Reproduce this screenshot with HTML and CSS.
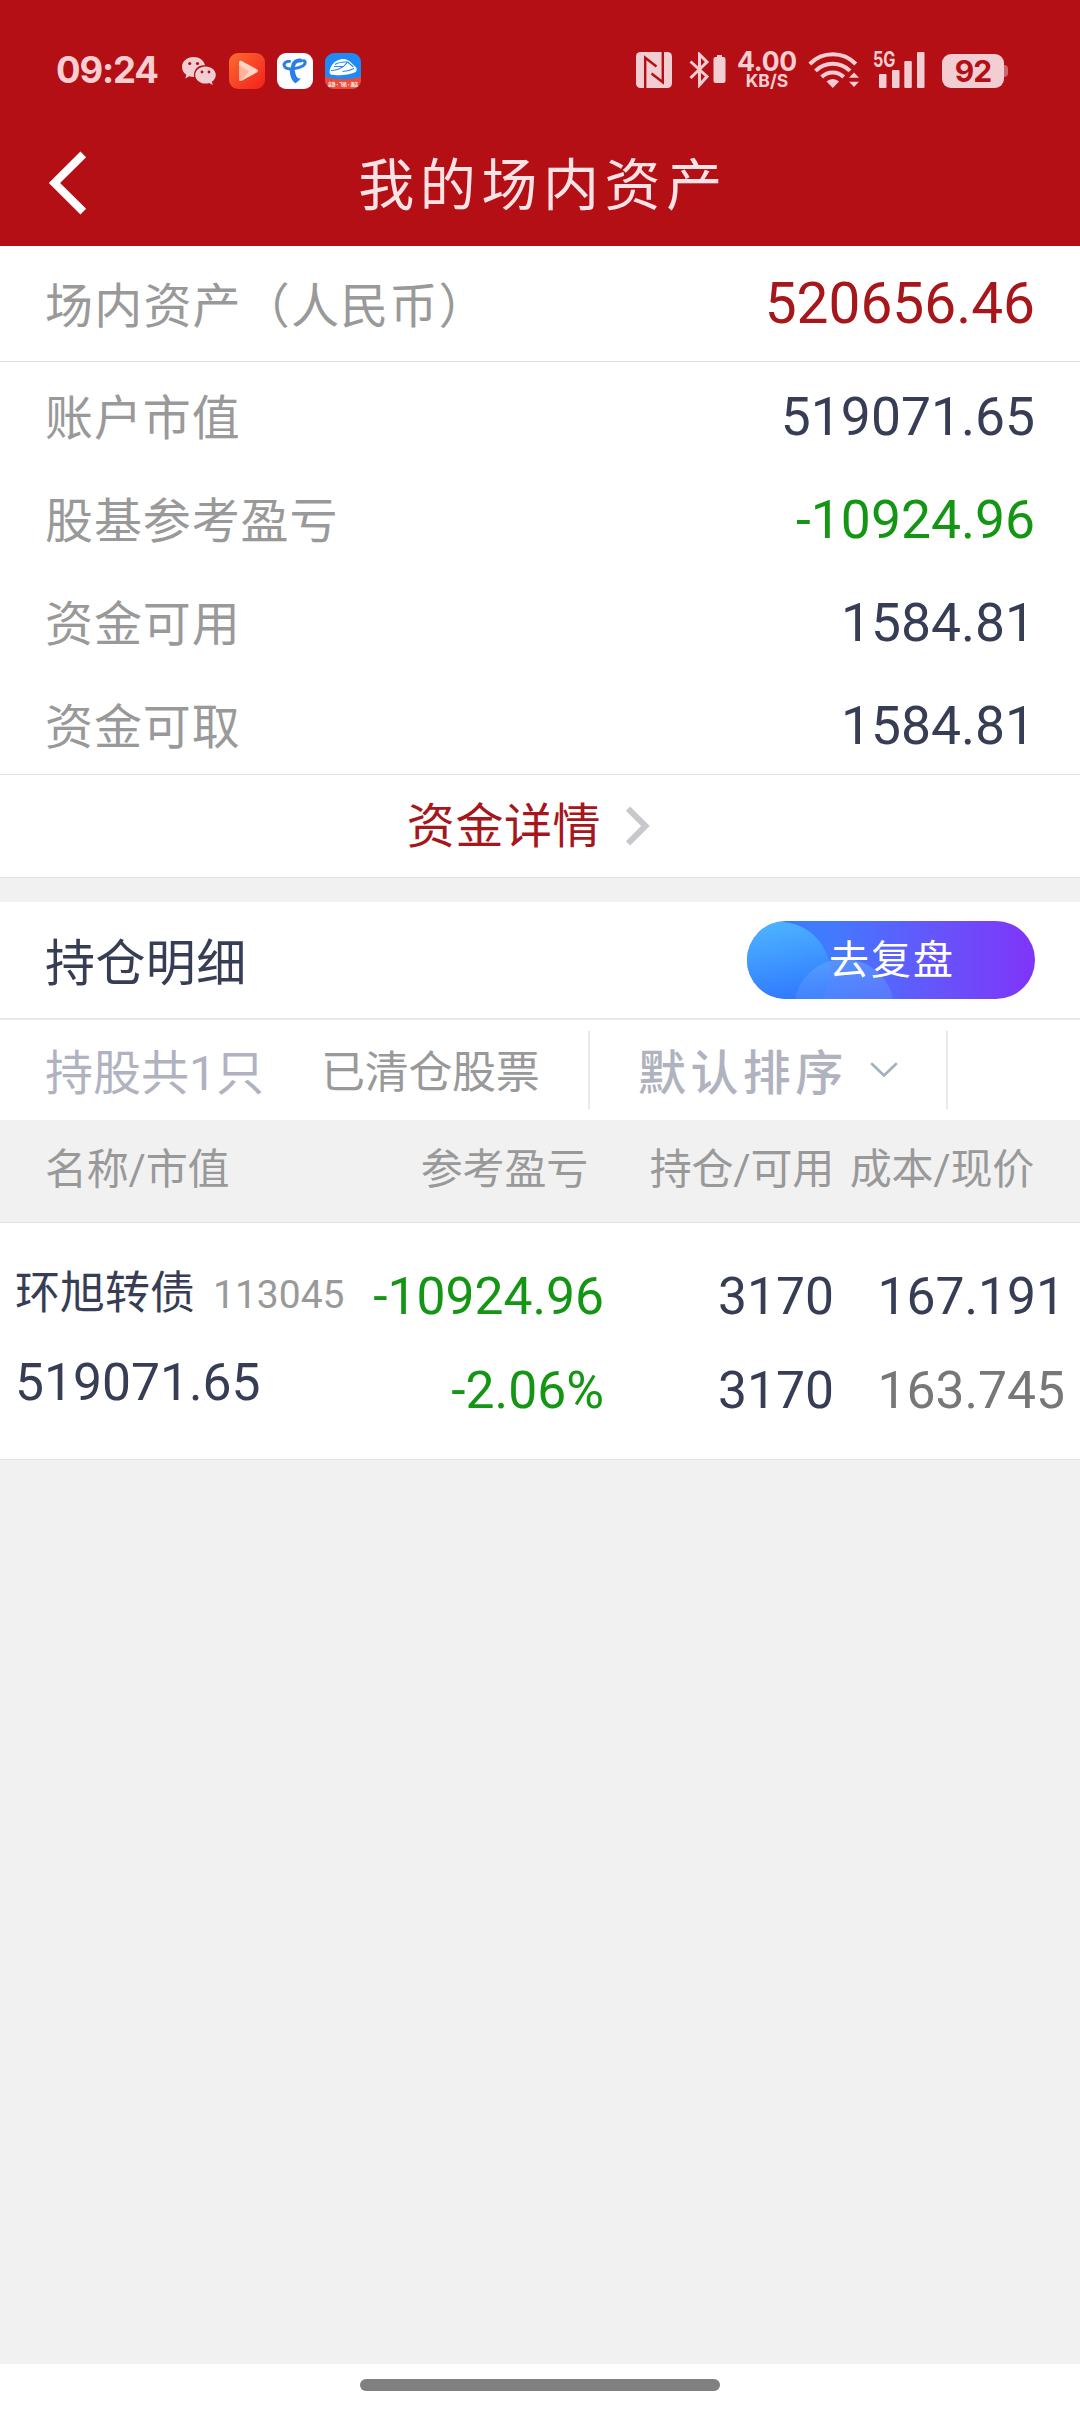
FILE: index.html
```html
<!DOCTYPE html>
<html lang="zh-CN">
<head>
<meta charset="utf-8">
<title>我的场内资产</title>
<link rel="stylesheet" href="styles.css">
</head>
<body>
<header class="top">
  <div class="status">
    <span class="clock">09:24</span>
    <div class="apps">
      <svg class="wechat" width="34" height="30" viewBox="0 0 34 30">
        <path class="tint" d="M11.5 1C5 1 0 5.400 0 11c0 3.200 1.700 6 4.300 7.800L3.300 22.400l4-2.100c1.300.4 2.700.6 4.200.6h.7A9.500 9.500 0 0 1 23 9.300C22 4.500 17.300 1 11.500 1z"/>
        <path class="tint" d="M23.500 10.500C17.700 10.500 13.200 14.300 13.200 19s4.500 8.600 10.300 8.600c1.300 0 2.600-.2 3.700-.6l3.600 1.900-1-3.200C32.300 24.200 33.800 21.700 33.800 19c0-4.700-4.500-8.500-10.300-8.500z"/>
        <g class="hole"><circle cx="7.700" cy="7.500" r="1.600"/><circle cx="15.500" cy="7.500" r="1.600"/><circle cx="20" cy="16" r="1.400"/><circle cx="27" cy="16" r="1.400"/></g>
      </svg>
      <svg width="36" height="36" viewBox="0 0 36 36">
        <defs><linearGradient id="play" x1="0" y1="0" x2="1" y2="1"><stop offset="0" stop-color="#fb6b30"/><stop offset="1" stop-color="#f4201c"/></linearGradient></defs>
        <rect width="36" height="36" rx="9" fill="url(#play)"/>
        <path d="M10 9.500c0-1.500 1.300-2.200 2.600-1.500l15.600 8.400c1.200.7 1.200 2.200 0 2.900L12.600 27.800c-1.300.7-2.600 0-2.600-1.500z" fill="#fdd5c7"/>
        <path d="M10 12l10 6.500L12.600 27.800c-1.300.7-2.600 0-2.600-1.500z" fill="#fcb39c"/>
      </svg>
      <svg width="36" height="36" viewBox="0 0 36 36">
        <rect width="36" height="36" rx="9" fill="#fff"/>
        <g fill="none" stroke="#2b7fe8" stroke-linecap="round" stroke-linejoin="round">
          <path d="M12.500 8.300C8.500 8.300 6.500 10.300 7.200 12.700c.8 2.800 4.500 3.600 9 3 6-.8 12-3 12-6 0-1-.7-1.800-1.700-1.900" stroke-width="3"/>
          <path d="M23.500 7.500C19.500 7 16.500 9.500 15.800 14c-.6 5 .2 9.500 3 13.500" stroke-width="4"/>
        </g>
        <path d="M12.800 17c0 6 2 11 5.700 13.300.8-.2 1-.8 1-1.500 1.800-.3 3-1.500 4.200-3.500-3.200.8-5.200-2.300-5.700-7.300z" fill="#2b7fe8"/>
      </svg>
      <svg width="36" height="36" viewBox="0 0 36 36">
        <defs><clipPath id="tile"><rect width="36" height="36" rx="9"/></clipPath></defs>
        <g clip-path="url(#tile)">
          <rect width="36" height="36" fill="#1f8af5"/>
          <path d="M0 24q18 4.500 36 0V36H0z" fill="#ee4a35"/>
          <path d="M4.500 19C5 13 9 7.500 16 6.200c6-.8 9 2.300 12 5.300 2.500 2 4 3.500 3.700 5.500-.4 2.500-4.700 4-11.700 4.700-6 .7-13 .8-14.500-.4-.7-.6-1-1.300-1-2.300z" fill="#fff"/>
          <path d="M10 11.500q4-3 12.500-2.500l-4 4.500H9M6 17.500q7 0 12-4M17.500 18.500q7-.5 11.500-3M22.500 9l6 5" fill="none" stroke="#1f8af5" stroke-width="1.100"/>
          <text x="18" y="33.300" class="tile-text" textLength="30" lengthAdjust="spacingAndGlyphs">高铁·飞机·酒店</text>
        </g>
      </svg>
    </div>
    <div class="signals">
      <svg width="36" height="36" viewBox="0 0 36 36">
        <rect class="tint" width="36" height="36" rx="4.500"/>
        <path class="cut" d="M9.200 36V5.800L20.500 14.500M26.800 0v30.200L15.500 21.500" stroke-width="2.400"/>
      </svg>
      <svg class="bt" width="37" height="36" viewBox="0 0 37 36">
        <path class="line" d="M1.500 9.500l16.500 15L10.500 33V2.500L18 10 1.500 26" stroke-width="3"/>
        <path class="tint" d="M28 3h5v2h1.500a2 2 0 0 1 2 2v22a2 2 0 0 1-2 2h-8a2 2 0 0 1-2-2V7a2 2 0 0 1 2-2H28z"/>
      </svg>
      <div class="speed"><b>4.00</b><span>KB/S</span></div>
      <svg class="wifi" width="52" height="36" viewBox="0 0 52 36">
        <g class="line" stroke-width="4"><path d="M1.800 12a32 32 0 0 1 46 0"/><path d="M7.500 18.800a24.500 24.500 0 0 1 34.500 0"/><path d="M13.700 25a15.500 15.500 0 0 1 22 0"/></g>
        <path class="tint" d="M24.800 36l-6.300-6.500a9 9 0 0 1 12.600 0z"/>
        <path class="tint" d="M46 20.500l5 5.300H41zM46 35l5-5.300H41z"/>
      </svg>
      <svg class="cell" width="52" height="37" viewBox="0 -1 52 37">
        <text x="0" y="14.800" class="net" textLength="22.500" lengthAdjust="spacingAndGlyphs">5G</text>
        <g class="tint"><rect x="6" y="22" width="7.500" height="14" rx="1"/><rect x="19" y="18" width="7.500" height="18" rx="1"/><rect x="31.300" y="9" width="7.500" height="27" rx="1"/><rect x="44" y="0" width="7.500" height="36" rx="1"/></g>
      </svg>
      <div class="battery"><span>92</span></div>
    </div>
  </div>
  <div class="nav">
    <svg class="back" width="40" height="64" viewBox="0 0 40 64"><path d="M35.300 3.300L6.500 32l28.800 28.700"/></svg>
    <h1>我的场内资产</h1>
  </div>
</header>

<section class="summary">
  <div class="row total"><span class="label">场内资产（人民币）</span><span class="num">520656.46</span></div>
  <div class="rows">
    <div class="row"><span class="label">账户市值</span><span class="num">519071.65</span></div>
    <div class="row"><span class="label">股基参考盈亏</span><span class="num down">-10924.96</span></div>
    <div class="row"><span class="label">资金可用</span><span class="num">1584.81</span></div>
    <div class="row"><span class="label">资金可取</span><span class="num">1584.81</span></div>
  </div>
  <a class="detail"><span>资金详情</span><svg width="26" height="40" viewBox="0 0 26 40"><path d="M3 2.700L20.500 20 3 37.300"/></svg></a>
</section>

<section class="holdings">
  <div class="heading">
    <h2>持仓明细</h2>
    <a class="review">
      <svg class="review-bg" width="288" height="78" viewBox="0 0 288 78">
        <defs>
          <linearGradient id="pill"><stop offset="0" stop-color="#3179ff"/><stop offset=".28" stop-color="#417bff"/><stop offset=".65" stop-color="#6555fb"/><stop offset="1" stop-color="#8034f8"/></linearGradient>
          <linearGradient id="c1" x1=".4" y1="0" x2=".6" y2="1"><stop offset="0" stop-color="#4db4ff"/><stop offset=".8" stop-color="#2f78ff"/></linearGradient>
          <linearGradient id="c2" x1="0" y1="0" x2="0" y2="1"><stop offset="0" stop-color="#66a8ff" stop-opacity=".55"/><stop offset=".5" stop-color="#5c8dff" stop-opacity=".35"/></linearGradient>
          <clipPath id="pillclip"><rect width="288" height="78" rx="39"/></clipPath>
        </defs>
        <g clip-path="url(#pillclip)"><rect width="288" height="78" fill="url(#pill)"/><circle cx="33" cy="51" r="50" fill="url(#c1)"/><circle cx="97" cy="88" r="50" fill="url(#c2)"/></g>
      </svg>
      <span>去复盘</span>
    </a>
  </div>
  <div class="tabs">
    <span class="tab count">持股共1只</span>
    <span class="tab cleared">已清仓股票</span>
    <span class="tab sort"><span>默认排序</span><svg width="28" height="18" viewBox="0 0 28 18"><path d="M2 3l12 11.500L26 3"/></svg></span>
  </div>
  <div class="grid head"><span>名称/市值</span><span>参考盈亏</span><span>持仓/可用</span><span>成本/现价</span></div>
  <div class="grid item">
    <div class="first"><p class="name">环旭转债<small>113045</small></p><p>519071.65</p></div>
    <div class="down"><p>-10924.96</p><p>-2.06%</p></div>
    <div><p>3170</p><p>3170</p></div>
    <div><p>167.191</p><p class="price">163.745</p></div>
  </div>
</section>
<footer class="home"><i></i></footer>
</body>
</html>
```
FILE: styles.css
```css
* { box-sizing: border-box; margin: 0; padding: 0; }
body {
  width: 1080px; height: 2412px;
  display: flex; flex-direction: column;
  background: #f1f1f1; color: #363d55;
  font-family: Roboto, "Noto Sans CJK SC", sans-serif;
  overflow: hidden;
}
svg { display: block; flex: none; }
h1, h2 { font-weight: 400; }

.top { height: 246px; background: #b50f16; flex: none; }
.status { height: 120px; display: flex; align-items: flex-start; padding: 52px 72px 0 56px; font-family: Inter, sans-serif; color: #f8ced2; }
.clock { width: 126px; font-size: 36.500px; font-weight: 700; line-height: 36px; letter-spacing: -1.200px; }
.apps { display: flex; align-items: center; gap: 12px; margin-top: 1px; }
.wechat { margin-right: 1px; }
.tint { fill: #f2cdd1; }
.hole { fill: #b50f16; }
.line { fill: none; stroke: #f2cdd1; }
.cut { fill: none; stroke: #b50f16; }
.tile-text { font: 700 5px "Noto Sans CJK SC", sans-serif; fill: #fff; text-anchor: middle; }
.signals { display: flex; align-items: flex-start; margin-left: auto; }
.bt { margin-left: 17px; }
.speed { width: 64px; margin-left: 9px; display: flex; flex-direction: column; align-items: center; }
.speed b { font-size: 26.500px; line-height: 19px; font-weight: 700; letter-spacing: -.2px; }
.speed span { font-size: 17.500px; line-height: 18px; margin-top: 1px; font-weight: 700; }
.wifi { margin-left: 9px; }
.cell { margin: -1px 0 0 13px; overflow: visible; }
.net { font: 700 21px Inter, sans-serif; fill: #f2cdd1; }
.battery { position: relative; width: 62px; height: 34px; margin: 2px 4px 0 17px; border-radius: 9px; background: #f2cdd1; color: #b50f16; text-align: center; font-size: 30px; line-height: 35px; font-weight: 700; letter-spacing: -1px; }
.battery::after { content: ""; position: absolute; left: 62px; top: 11px; width: 4px; height: 12px; border-radius: 0 4px 4px 0; background: #d0656b; }

.nav { height: 126px; display: grid; grid-template-columns: 90px 1fr 90px; align-items: center; }
.back { margin-left: 48px; }
.back path { fill: none; stroke: #fff; stroke-width: 8; }
.nav h1 { color: #fbe3e5; font-size: 56px; line-height: 126px; letter-spacing: 5.600px; padding: 3px 0 0 6px; height: 126px; text-align: center; }

.summary { background: #fff; flex: none; }
.row { height: 103px; padding: 0 45px; display: flex; justify-content: space-between; align-items: baseline; line-height: 109px; }
.label { font-size: 48px; letter-spacing: .9px; color: #999; }
.num { font-size: 53.400px; }
.down { color: #149614; }
.total { height: 116px; line-height: 115px; border-bottom: 1px solid #dfdfdf; }
.total .label { letter-spacing: 1.200px; }
.total .num { font-size: 56.800px; color: #a6161b; }
.detail { height: 104px; display: flex; align-items: center; justify-content: center; gap: 24px; padding-right: 22px; border: solid #e2e2e2; border-width: 1px 0; color: #a6161b; font-size: 48px; letter-spacing: .6px; }
.detail span { line-height: 96px; padding-top: 2px; }
.detail path { fill: none; stroke: #c8c8cc; stroke-width: 6; }

.holdings { margin-top: 24px; background: #fff; flex: none; border-bottom: 1px solid #e2e2e2; }
.heading { height: 118px; display: flex; justify-content: space-between; align-items: center; padding: 0 45px; border-bottom: 2px solid #e6eaee; }
.heading h2 { font-size: 50px; line-height: 100px; padding-top: 8px; letter-spacing: .4px; }
.review { position: relative; width: 288px; height: 78px; color: #fff; }
.review-bg { position: absolute; inset: 0; }
.review span { position: relative; display: block; font-size: 40px; letter-spacing: 2px; line-height: 80px; padding-left: 82px; }
.tabs { height: 100px; display: flex; align-items: center; padding-left: 45px; }
.tab { height: 78px; line-height: 85px; white-space: nowrap; }
.count { width: 276px; font-size: 48px; color: #b0b3bf; }
.cleared { width: 269px; font-size: 44px; letter-spacing: -.3px; color: #999; border-right: 2px solid #e6e9ee; }
.sort { width: 358px; display: flex; align-items: center; padding-left: 48px; font-size: 48px; letter-spacing: 4.400px; color: #b0b3bf; font-weight: 500; border-right: 2px solid #e6e9ee; }
.sort span { padding-top: 6px; }
.sort svg { margin-left: 22px; }
.sort path { fill: none; stroke: #a3afc0; stroke-width: 2.600; stroke-linecap: round; }

.grid { display: grid; text-align: right; }
.head { height: 103px; padding-left: 45px; grid-template-columns: 250px 293px 246px 200px; background: #f1f1f1; border-bottom: 1px solid #e2e2e2; font-size: 42px; line-height: 100px; letter-spacing: -.2px; color: #999; }
.head span { white-space: nowrap; }
.head span:first-child { text-align: left; }
.item { height: 236px; padding: 27px 15px 0 15px; grid-template-columns: 340px 249px 230px 231px; font-size: 51.600px; line-height: 94px; }
.item .first { text-align: left; margin-top: -3px; white-space: nowrap; }
.first p + p { line-height: 80px; }
.name { font-size: 45px; }
.name small { font-size: 39px; color: #999; margin-left: 18px; position: relative; top: -1px; }
.price { color: #777; }

.home { height: 48px; margin-top: auto; background: #fff; padding-top: 15px; flex: none; }
.home i { display: block; width: 360px; height: 12px; margin: 0 auto; border-radius: 6px; background: #808080; }
```
